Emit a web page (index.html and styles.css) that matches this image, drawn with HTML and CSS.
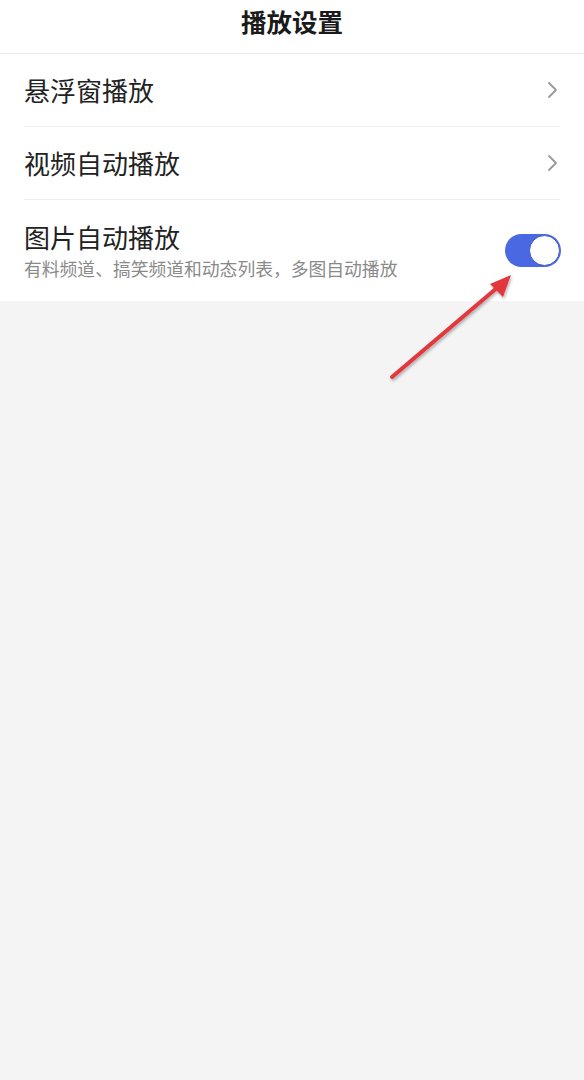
FILE: index.html
```html
<!DOCTYPE html>
<html lang="zh-CN">
<head>
    <meta charset="UTF-8">
    <meta name="viewport" content="width=device-width, initial-scale=1.0">
    <title>播放设置</title>
    <link rel="stylesheet" href="styles.css">
</head>
<body>
    <div class="page">
        <header class="header">
            <h1>播放设置</h1>
        </header>

        <ul class="settings">
            <li class="row">
                <span class="row-title">悬浮窗播放</span>
                <svg class="chevron" width="12" height="18" viewBox="0 0 12 18">
                    <path d="M2 2 L9 9 L2 16" fill="none" stroke="#9a9a9a" stroke-width="1.8" stroke-linecap="round" stroke-linejoin="round"/>
                </svg>
            </li>
            <li class="row">
                <span class="row-title">视频自动播放</span>
                <svg class="chevron" width="12" height="18" viewBox="0 0 12 18">
                    <path d="M2 2 L9 9 L2 16" fill="none" stroke="#9a9a9a" stroke-width="1.8" stroke-linecap="round" stroke-linejoin="round"/>
                </svg>
            </li>
            <li class="row row-tall">
                <div class="row-text">
                    <span class="row-title">图片自动播放</span>
                    <span class="row-desc">有料频道、搞笑频道和动态列表，多图自动播放</span>
                </div>
                <div class="switch on"><div class="knob"></div></div>
            </li>
        </ul>

        <!-- 标注箭头 -->
        <svg class="arrow" width="584" height="420" viewBox="0 0 584 420">
            <defs>
                <filter id="shadow" x="-20%" y="-20%" width="140%" height="140%">
                    <feDropShadow dx="1" dy="2" stdDeviation="1.5" flood-color="#000" flood-opacity="0.3"/>
                </filter>
            </defs>
            <g filter="url(#shadow)">
                <line x1="392" y1="377" x2="498" y2="287" stroke="#e2383d" stroke-width="4" stroke-linecap="round"/>
                <polygon points="511,275 490,284 503,297" fill="#e2383d"/>
            </g>
        </svg>
    </div>
</body>
</html>
```

FILE: styles.css
```css
* {
    margin: 0;
    padding: 0;
    box-sizing: border-box;
}

body {
    font-family: 'Noto Sans CJK SC', 'Noto Sans', sans-serif;
    background-color: #f4f4f4;
    width: 584px;
    min-height: 1080px;
}

.page {
    position: relative;
}

/* 顶部标题 */
.header {
    height: 54px;
    background-color: #fff;
    border-bottom: 1px solid #ececec;
    display: flex;
    align-items: center;
    justify-content: center;
}

.header h1 {
    font-size: 25.5px;
    font-weight: 700;
    color: #1a1a1a;
    line-height: 1;
    margin-top: -12px;
}

/* 设置列表 */
.settings {
    list-style: none;
    background-color: #fff;
    padding-left: 24px;
    padding-right: 24px;
}

.row {
    height: 73px;
    display: flex;
    align-items: center;
    justify-content: space-between;
    border-bottom: 1px solid #efefef;
}

.row-tall {
    height: 101px;
    border-bottom: none;
    padding-bottom: 2px;
}

.row-text {
    display: flex;
    flex-direction: column;
}

.row-title {
    font-size: 26px;
    color: #222;
    line-height: 34px;
}

.row-desc {
    font-size: 17.8px;
    color: #8a8a8a;
    line-height: 22px;
    margin-top: 3px;
}

.chevron {
    margin-right: 1px;
}

/* 开关 */
.switch {
    width: 56px;
    height: 33px;
    border-radius: 17px;
    background-color: #ccc;
    position: relative;
    margin-right: -1px;
    margin-top: 2px;
}

.switch.on {
    background-color: #4a68e2;
}

.knob {
    position: absolute;
    top: 1px;
    right: 1px;
    width: 31px;
    height: 31px;
    border-radius: 50%;
    background-color: #fff;
    border: 1px solid #3d58c6;
}

/* 标注 */
.arrow {
    position: absolute;
    top: 0;
    left: 0;
    pointer-events: none;
}
```
